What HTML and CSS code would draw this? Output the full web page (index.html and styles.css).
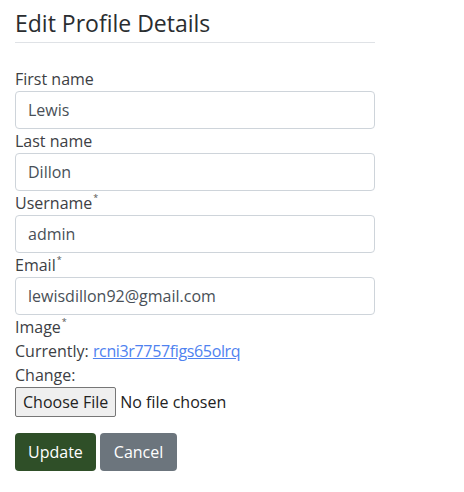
FILE: index.html
```html
<!DOCTYPE html>
<html lang="en">
<head>
<meta charset="utf-8">
<title>Edit Profile Details</title>
<link rel="stylesheet" href="styles.css">
</head>
<body>
<main class="page">
  <h4 class="title">Edit Profile Details</h4>
  <hr class="rule">
  <form class="form">
    <div class="field">
      <label class="label" for="first">First name</label>
      <input class="input" id="first" type="text" value="Lewis">
    </div>
    <div class="field">
      <label class="label" for="last">Last name</label>
      <input class="input" id="last" type="text" value="Dillon">
    </div>
    <div class="field">
      <label class="label" for="user">Username<span class="req">*</span></label>
      <input class="input" id="user" type="text" value="admin">
    </div>
    <div class="field">
      <label class="label" for="email">Email<span class="req">*</span></label>
      <input class="input" id="email" type="email" value="lewisdillon92@gmail.com">
    </div>
    <div class="image-field">
      <div class="line">Image<span class="req">*</span></div>
      <div class="line">Currently: <a class="link" href="#">rcni3r7757figs65olrq</a></div>
      <div class="line">Change:</div>
      <div class="file-row"><span class="file-btn">Choose File</span><span class="file-name">No file chosen</span></div>
    </div>
    <div class="actions">
      <button class="btn btn-update" type="button">Update</button>
      <button class="btn btn-cancel" type="button">Cancel</button>
    </div>
  </form>
</main>
</body>
</html>
```
FILE: styles.css
```css
* { box-sizing: border-box; }
body {
  margin: 0;
  font-family: "Open Sans", "DejaVu Sans", sans-serif;
  font-size: 16px;
  line-height: 24px;
  color: #3d4044;
  background: #fff;
}
.page {
  width: 390px;
  padding: 0 15px;
}
.title {
  margin: 0;
  padding-top: 9px;
  font-size: 23px;
  line-height: 28px;
  font-weight: 400;
  color: #2a2d30;
}
.rule {
  margin: 5px 0 0;
  border: 0;
  border-top: 1px solid #dfe2e6;
}
.form {
  padding-top: 24px;
}
.field {
  display: flex;
  flex-direction: column;
}
.label {
  display: block;
  height: 24px;
}
.req {
  font-size: 9px;
  vertical-align: top;
  line-height: 14px;
  margin-left: 1px;
  color: #555;
}
.input {
  height: 38px;
  width: 360px;
  padding: 6px 12px;
  font: inherit;
  color: #495057;
  border: 1px solid #ced4da;
  border-radius: 4px;
  background: #fff;
}
.line { height: 24px; }
.link {
  color: #4f82f0;
  text-decoration: underline;
  letter-spacing: -0.35px;
}
.file-row {
  display: flex;
  align-items: center;
  height: 30px;
}
.file-btn {
  display: inline-flex;
  align-items: center;
  height: 30px;
  padding: 0 7px;
  background: #efefef;
  border: 1px solid #767676;
  border-radius: 2px;
  color: #222;
}
.file-name {
  margin-left: 4px;
  color: #222;
}
.actions {
  display: flex;
  gap: 4px;
  padding-top: 16px;
}
.btn {
  height: 38px;
  padding: 6px 12px;
  font: inherit;
  border: 1px solid transparent;
  border-radius: 4px;
  color: #fff;
}
.btn-update { background: #2f4f28; }
.btn-cancel { background: #6c757d; padding: 6px 13px; }
```
